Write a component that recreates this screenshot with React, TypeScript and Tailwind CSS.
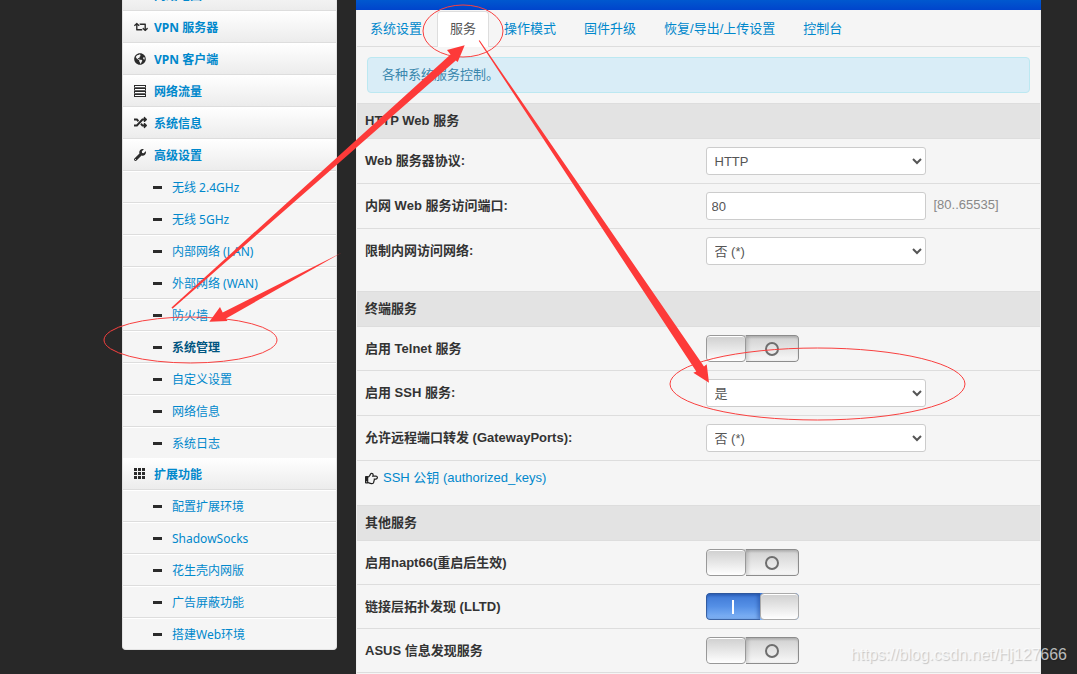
import { useState } from 'react'
import type { ReactNode } from 'react'
import { FaGlobeAmericas, FaHome, FaRandom, FaRegHandPointRight, FaRetweet, FaWrench } from 'react-icons/fa'

const TasksIcon = () => (
    <svg width="12" height="12" viewBox="0 0 12 12" shapeRendering="crispEdges">
        <path fill="currentColor" d="M0 0h12v12H0z" />
        <path fill="#fff" d="M1 1h10v1H1zM1 4h10v1H1zM1 7h10v1H1zM1 10h10v1H1z" />
        <path fill="#999" d="M0 2.500h12v.500H0zM0 5.500h12v.500H0zM0 8.500h12v.500H0z" shapeRendering="auto" />
    </svg>
)

const GridIcon = () => (
    <svg width="12" height="12" viewBox="0 0 12 12" fill="currentColor" shapeRendering="crispEdges">
        <path d="M0 0h3v3H0zM4 0h3v3H4zM8 0h3v3H8zM0 4h3v3H0zM4 4h3v3H4zM8 4h3v3H8zM0 8h3v3H0zM4 8h3v3H4zM8 8h3v3H8z" />
    </svg>
)

type MenuGroup = {
    title: string
    icon: ReactNode
    items?: string[]
}

const menu: MenuGroup[] = [
    { title: '网络地图', icon: <FaHome size={13} /> },
    { title: 'VPN 服务器', icon: <FaRetweet size={14} /> },
    { title: 'VPN 客户端', icon: <FaGlobeAmericas size={12} /> },
    { title: '网络流量', icon: <TasksIcon /> },
    { title: '系统信息', icon: <FaRandom size={13} /> },
    {
        title: '高级设置',
        icon: <FaWrench size={12} />,
        items: [
            '无线 2.4GHz',
            '无线 5GHz',
            '内部网络 (LAN)',
            '外部网络 (WAN)',
            '防火墙',
            '系统管理',
            '自定义设置',
            '网络信息',
            '系统日志',
        ],
    },
    {
        title: '扩展功能',
        icon: <GridIcon />,
        items: ['配置扩展环境', 'ShadowSocks', '花生壳内网版', '广告屏蔽功能', '搭建Web环境'],
    },
]

const tabs = ['系统设置', '服务', '操作模式', '固件升级', '恢复/导出/上传设置', '控制台']

const Sidebar = () => (
    <nav className="-mt-[21px] w-[215px] shrink-0 self-start overflow-hidden rounded-b border border-t-0 border-[#e3e3e3] bg-[#f5f5f5] font-['Noto_Sans','Noto_Sans_CJK_SC',sans-serif] text-xs leading-[18px]">
        {menu.map((group) => (
            <div key={group.title}>
                <a
                    href="#"
                    className="flex h-8 items-center border-b border-[#ddd] bg-linear-to-b from-white to-[#ececec] pl-[11px] font-bold text-[#0088cc]"
                >
                    <span className="w-5 text-[#2b2b2b]">{group.icon}</span>
                    <span className="pt-0.5">{group.title}</span>
                </a>
                {group.items && (
                    <ul>
                        {group.items.map((item) => (
                            <li key={item} className="border-b border-[#ddd] last:border-b-0">
                                <a
                                    href="#"
                                    className={
                                        item === '系统管理'
                                            ? 'flex h-[31px] items-center gap-[10px] border-t border-white pl-[30px] font-bold text-[#005580]'
                                            : 'flex h-[31px] items-center gap-[10px] border-t border-white pl-[30px] text-[#0088cc]'
                                    }
                                >
                                    <span className="h-[3px] w-[9px] bg-[#2b2b2b]" />
                                    <span className="pt-0.5">{item}</span>
                                </a>
                            </li>
                        ))}
                    </ul>
                )}
            </div>
        ))}
    </nav>
)

const SectionHead = ({ title }: { title: string }) => (
    <tr className="border-t border-[#ddd] bg-[#e3e3e3]">
        <th colSpan={2} className="px-2 py-2 text-left font-bold">
            {title}
        </th>
    </tr>
)

type RowProps = {
    id: string
    label: string
    last?: boolean
    children: ReactNode
}

const Row = ({ id, label, last, children }: RowProps) => (
    <tr className="border-t border-[#ddd]">
        <th className={last ? 'w-1/2 px-2 pt-[13px] text-left align-top' : 'w-1/2 px-2 text-left align-middle'}>
            <label htmlFor={id}>{label}</label>
        </th>
        <td className={last ? 'pt-2 pr-2 pb-[26px] pl-[7px]' : 'py-2 pr-2 pl-[7px]'}>{children}</td>
    </tr>
)

const Select = ({ id, options }: { id: string; options: string[] }) => (
    <select id={id} className="block h-7 w-[220px] rounded-[3px] border border-[#ccc] bg-white px-1 text-[#555]">
        {options.map((option) => (
            <option key={option}>{option}</option>
        ))}
    </select>
)

const Toggle = ({ id, on = false }: { id: string; on?: boolean }) => {
    const [checked, setChecked] = useState(on)

    return (
        <label className="relative block h-[27px] w-[93px] cursor-pointer overflow-hidden rounded">
            <input
                id={id}
                type="checkbox"
                className="absolute inset-0 opacity-0"
                checked={checked}
                onChange={(e) => setChecked(e.target.checked)}
            />
            {checked ? (
                <span className="flex h-full rounded bg-linear-to-b from-[#3c75d2] via-[#5590e6] via-50% to-[#86b8f8]">
                    <span className="flex flex-1 items-center justify-center rounded-l border border-r-0 border-[#2b5190]/80 shadow-[inset_0_2px_2px_rgba(20,60,140,0.3),inset_-3px_0_3px_rgba(20,60,140,0.3)]">
                        <span className="h-[14px] w-[2px] bg-white" />
                    </span>
                    <span className="w-[39px] rounded border border-[#aaa] bg-linear-to-b from-[#cfcfcf] to-white shadow-[inset_0_1px_0_#fff]" />
                </span>
            ) : (
                <span className="flex h-full rounded bg-linear-to-b from-[#cfcfcf] to-[#fafafa]">
                    <span className="w-[40px] rounded border border-[#999] bg-linear-to-b from-[#cfcfcf] to-white shadow-[inset_0_1px_0_#fff]" />
                    <span className="flex flex-1 items-center justify-center rounded-r border border-l-0 border-[#8c8c8c] shadow-[inset_0_2px_2px_rgba(0,0,0,0.12),inset_3px_0_3px_rgba(0,0,0,0.1)]">
                        <span className="size-[14px] rounded-full border-2 border-[#6e6e6e]" />
                    </span>
                </span>
            )}
        </label>
    )
}

const SettingsTable = () => (
    <table className="w-full border-collapse border-b border-[#ddd]">
        <tbody>
            <SectionHead title="HTTP Web 服务" />
            <Row id="http_proto" label="Web 服务器协议:">
                <Select id="http_proto" options={['HTTP', 'HTTPS']} />
            </Row>
            <Row id="http_port" label="内网 Web 服务访问端口:">
                <div className="flex gap-2">
                    <input
                        id="http_port"
                        type="text"
                        defaultValue="80"
                        className="block h-7 w-[220px] rounded-[3px] border border-[#ccc] bg-white px-[5px] text-[#555]"
                    />
                    <span className="pt-1 text-[#888]">[80..65535]</span>
                </div>
            </Row>
            <Row id="http_access" label="限制内网访问网络:" last>
                <Select id="http_access" options={['否 (*)', '是']} />
            </Row>

            <SectionHead title="终端服务" />
            <Row id="telnetd" label="启用 Telnet 服务">
                <Toggle id="telnetd" />
            </Row>
            <Row id="sshd_enable" label="启用 SSH 服务:">
                <Select id="sshd_enable" options={['是', '否 (*)']} />
            </Row>
            <Row id="sshd_ports" label="允许远程端口转发 (GatewayPorts):">
                <Select id="sshd_ports" options={['否 (*)', '是']} />
            </Row>
            <tr className="border-t border-[#ddd]">
                <td colSpan={2} className="px-2 pt-2 pb-[18px]">
                    <a href="#" className="flex items-center gap-[5px] text-[#0088cc]">
                        <FaRegHandPointRight size={13} className="text-[#222]" />
                        SSH 公钥 (authorized_keys)
                    </a>
                </td>
            </tr>

            <SectionHead title="其他服务" />
            <Row id="napt66" label="启用napt66(重启后生效)">
                <Toggle id="napt66" />
            </Row>
            <Row id="lltd" label="链接层拓扑发现 (LLTD)">
                <Toggle id="lltd" on />
            </Row>
            <Row id="adsc" label="ASUS 信息发现服务">
                <Toggle id="adsc" />
            </Row>
        </tbody>
    </table>
)

// Red hand-drawn marks that lead from the menu to the tab and on to the SSH setting
const Annotations = () => (
    <svg
        className="pointer-events-none absolute top-0 left-0"
        width="1077"
        height="674"
        viewBox="0 0 1077 674"
        fill="none"
        aria-hidden="true"
    >
        <g stroke="#f9403f" strokeWidth="1">
            <ellipse cx="463" cy="31" rx="40" ry="26" />
            <ellipse cx="190.500" cy="340" rx="86.500" ry="23" />
            <ellipse cx="817.500" cy="384" rx="147.500" ry="36" />
        </g>
        <g fill="#fd3a39">
            <path d="M171.500 307.500L450.500 54.500L447 50L464.700 45.300L457.700 62L455.800 60.500L172.500 308.700Z" />
            <path d="M342 252.500L222.700 312.500L220 307L209.300 321.700L227.500 321L226 318.500Z" />
            <path d="M478.700 40.700L696.300 371.500L693.300 372.700L709 382.700L706.700 364.300L704 366.500L479.600 40.300Z" />
        </g>
    </svg>
)

const App = () => (
    <div className="relative flex h-screen overflow-hidden bg-[#282828] pr-9 pl-[122px] font-['Liberation_Sans','Noto_Sans_CJK_SC',sans-serif] text-[13px] leading-[18px] text-[#333]">
        <Sidebar />

        <main className="ml-[19px] min-w-0 flex-1 border-x border-[#eee] bg-[#f5f5f5]">
            <div className="-mx-px h-[10px] bg-linear-to-b from-[#0058cf] to-[#0044cc]" />
            <ul className="flex gap-[2px] border-b border-[#ddd] pt-px">
                {tabs.map((tab) => (
                    <li key={tab} className="-mb-px">
                        <a
                            href="#"
                            className={
                                tab === '服务'
                                    ? 'block rounded-t border border-b-0 border-[#ddd] bg-white px-3 pt-2 pb-[9px] text-[#555]'
                                    : 'block border border-b-0 border-transparent px-3 pt-2 pb-[9px] text-[#0088cc]'
                            }
                        >
                            {tab}
                        </a>
                    </li>
                ))}
            </ul>
            <div className="m-[10px] rounded border border-[#bce8f1] bg-[#d9edf7] px-[14px] py-2 text-[#3a87ad]">
                各种系统服务控制。
            </div>
            <SettingsTable />
        </main>

        <Annotations />

        <div className="absolute right-[10px] bottom-[9px] text-base leading-5 text-white/70 [text-shadow:1px_1px_1px_rgba(0,0,0,0.2)]">
            https://blog.csdn.net/Hj127666
        </div>
    </div>
)

export default App
